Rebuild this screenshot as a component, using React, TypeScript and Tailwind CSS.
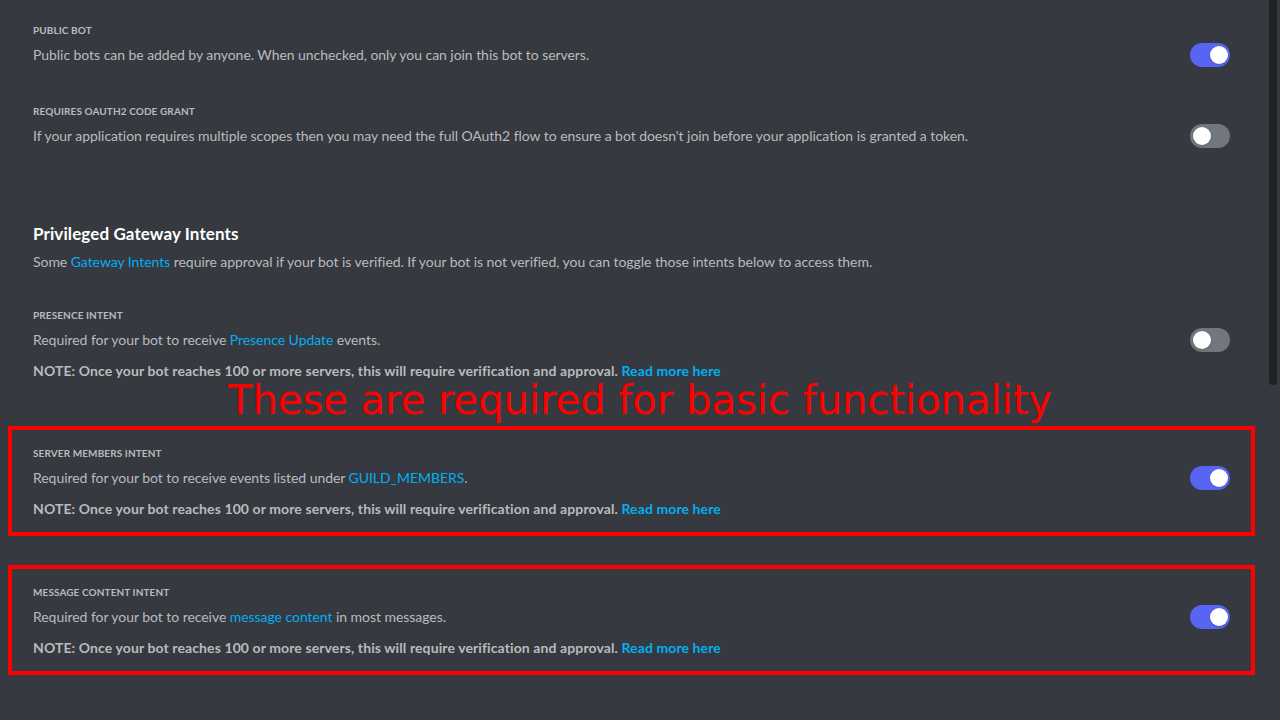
import React from 'react';

const FONT = { fontFamily: 'Lato, "Noto Sans", sans-serif' };

const Toggle: React.FC<{ on?: boolean }> = ({ on }) => (
  <div
    className={`relative w-10 h-6 rounded-full shrink-0 ${on ? 'bg-[#5865f2]' : 'bg-[#72767d]'}`}
  >
    <div
      className={`absolute top-[3px] w-[18px] h-[18px] rounded-full bg-white shadow-sm ${on ? 'right-[2px]' : 'left-[3px]'}`}
    />
  </div>
);

const Link: React.FC<{ children: React.ReactNode; bold?: boolean }> = ({ children, bold }) => (
  <span className={`text-[#00aff4] ${bold ? 'font-bold' : ''}`}>{children}</span>
);

const Note = () => (
  <p className="mt-[9px] text-[14px] leading-5 font-bold text-[#b9bbbe] tracking-[0.1px]">
    NOTE: Once your bot reaches 100 or more servers, this will require verification and approval.{' '}
    <Link bold>Read more here</Link>
  </p>
);

interface SettingProps {
  label: string;
  children: React.ReactNode;
  on?: boolean;
  note?: boolean;
}

const Setting: React.FC<SettingProps> = ({ label, children, on, note }) => (
  <div>
    <div className="h-4 flex items-center text-[10px] font-bold uppercase text-[#b9bbbe] tracking-[0.01em]">
      {label}
    </div>
    <div className="mt-[5px] flex items-center justify-between">
      <p className="text-[14px] leading-5 text-[#b9bbbe] tracking-[-0.05px]">{children}</p>
      <Toggle on={on} />
    </div>
    {note && <Note />}
  </div>
);

export default function App() {
  return (
    <div className="relative w-full h-[720px] bg-[#36393f] flex overflow-hidden" style={FONT}>
      <div className="flex-1 pl-[33px] pr-[38px] pt-[22px]">
        <Setting label="Public Bot" on>
          Public bots can be added by anyone. When unchecked, only you can join this bot to servers.
        </Setting>
        <div className="mt-9">
          <Setting label="Requires OAuth2 Code Grant">
            If your application requires multiple scopes then you may need the full OAuth2 flow to ensure a bot doesn't join before your application is granted a token.
          </Setting>
        </div>

        <h2 className="mt-[76px] text-[17px] leading-5 font-bold text-white tracking-[0.1px]">Privileged Gateway Intents</h2>
        <p className="mt-2 text-[14px] leading-5 text-[#b9bbbe] tracking-[-0.05px]">
          Some <Link>Gateway Intents</Link> require approval if your bot is verified. If your bot is not verified, you can toggle those intents below to access them.
        </p>

        <div className="mt-[35px]">
          <Setting label="Presence Intent" note>
            Required for your bot to receive <Link>Presence Update</Link> events.
          </Setting>
        </div>

        <div className="mt-[45px] -mx-[25px] px-[21px] pt-[15px] pb-[13px] border-4 border-[#ff0000]">
          <Setting label="Server Members Intent" on note>
            Required for your bot to receive events listed under <Link>GUILD_MEMBERS</Link>.
          </Setting>
        </div>

        <div className="mt-[29px] -mx-[25px] px-[21px] pt-[15px] pb-[13px] border-4 border-[#ff0000]">
          <Setting label="Message Content Intent" on note>
            Required for your bot to receive <Link>message content</Link> in most messages.
          </Setting>
        </div>
      </div>

      <div className="w-3 shrink-0">
        <div className="ml-px w-2 h-[385px] rounded-b-full bg-[#202225]" />
      </div>

      <div
        className="absolute left-[228px] top-[377px] text-[40px] text-[#ff0000] whitespace-nowrap"
        style={{ fontFamily: '"DejaVu Sans", sans-serif', lineHeight: 'normal' }}
      >
        These are required for basic functionality
      </div>
    </div>
  );
}
